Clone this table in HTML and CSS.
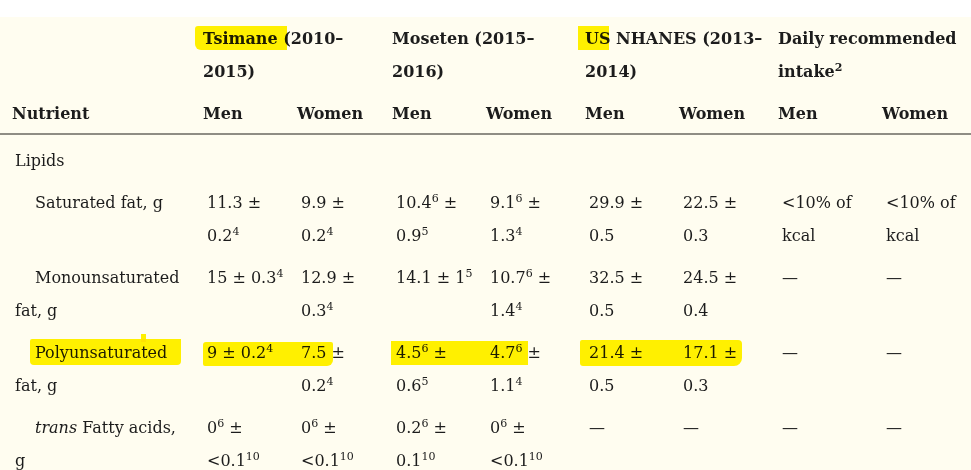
FILE: index.html
```html
<!DOCTYPE html>
<html lang="en">
<head>
<meta charset="utf-8">
<title>Nutrient intake</title>
<link rel="stylesheet" href="styles.css">
</head>
<body>
<div class="page">
  <div class="table-wrap">
    <table class="nutrients">
      <colgroup>
        <col class="c-label">
        <col class="c94"><col class="c95">
        <col class="c94"><col class="c99">
        <col class="c94"><col class="c99">
        <col class="c104"><col class="c97">
      </colgroup>
      <thead>
        <tr>
          <th></th>
          <th colspan="2">Tsimane (2010–<br>2015)</th>
          <th colspan="2">Moseten (2015–<br>2016)</th>
          <th colspan="2">US NHANES (2013–<br>2014)</th>
          <th colspan="2">Daily recommended<br>intake<sup>2</sup></th>
        </tr>
        <tr class="sub-head">
          <th class="first">Nutrient</th>
          <th>Men</th><th>Women</th>
          <th>Men</th><th>Women</th>
          <th>Men</th><th>Women</th>
          <th>Men</th><th>Women</th>
        </tr>
      </thead>
      <tbody>
        <tr class="group">
          <td class="label">Lipids</td>
          <td></td><td></td><td></td><td></td><td></td><td></td><td></td><td></td>
        </tr>
        <tr>
          <td class="label sub">Saturated fat, g</td>
          <td>11.3 ±<br>0.2<sup>4</sup></td>
          <td>9.9 ±<br>0.2<sup>4</sup></td>
          <td>10.4<sup>6</sup> ±<br>0.9<sup>5</sup></td>
          <td>9.1<sup>6</sup> ±<br>1.3<sup>4</sup></td>
          <td>29.9 ±<br>0.5</td>
          <td>22.5 ±<br>0.3</td>
          <td>&lt;10% of<br>kcal</td>
          <td>&lt;10% of<br>kcal</td>
        </tr>
        <tr>
          <td class="label sub">Monounsaturated fat, g</td>
          <td>15 ± 0.3<sup>4</sup></td>
          <td>12.9 ±<br>0.3<sup>4</sup></td>
          <td>14.1 ± 1<sup>5</sup></td>
          <td>10.7<sup>6</sup> ±<br>1.4<sup>4</sup></td>
          <td>32.5 ±<br>0.5</td>
          <td>24.5 ±<br>0.4</td>
          <td>—</td>
          <td>—</td>
        </tr>
        <tr>
          <td class="label sub">Polyunsaturated fat, g</td>
          <td>9 ± 0.2<sup>4</sup></td>
          <td>7.5 ±<br>0.2<sup>4</sup></td>
          <td>4.5<sup>6</sup> ±<br>0.6<sup>5</sup></td>
          <td>4.7<sup>6</sup> ±<br>1.1<sup>4</sup></td>
          <td>21.4 ±<br>0.5</td>
          <td>17.1 ±<br>0.3</td>
          <td>—</td>
          <td>—</td>
        </tr>
        <tr>
          <td class="label sub"><i>trans</i> Fatty acids, g</td>
          <td>0<sup>6</sup> ±<br>&lt;0.1<sup>10</sup></td>
          <td>0<sup>6</sup> ±<br>&lt;0.1<sup>10</sup></td>
          <td>0.2<sup>6</sup> ±<br>0.1<sup>10</sup></td>
          <td>0<sup>6</sup> ±<br>&lt;0.1<sup>10</sup></td>
          <td>—</td>
          <td>—</td>
          <td>—</td>
          <td>—</td>
        </tr>
      </tbody>
    </table>
    <span class="mark mark-tsimane"></span>
    <span class="mark mark-us"></span>
    <span class="mark mark-poly-label"></span>
    <span class="mark mark-poly-bump"></span>
    <span class="mark mark-poly-tsimane"></span>
    <span class="mark mark-poly-moseten"></span>
    <span class="mark mark-poly-us"></span>
  </div>
</div>
</body>
</html>
```

FILE: styles.css
```css
html, body {
  margin: 0;
  padding: 0;
  background: #ffffff;
}

.page {
  padding-top: 17px;
  width: 971px;
  overflow: hidden;
}

.table-wrap {
  position: relative;
  background: #fffdf0;
  width: 971px;
  height: 453px;
}

.nutrients {
  width: 971px;
  table-layout: fixed;
  border-collapse: collapse;
  font-family: "DejaVu Serif", "Liberation Serif", serif;
  font-size: 16px;
  color: #1c1c1c;
}

.c-label { width: 195px; }
.c94 { width: 94px; }
.c95 { width: 95px; }
.c97 { width: 97px; }
.c99 { width: 99px; }
.c104 { width: 104px; }

.nutrients th {
  text-align: left;
  vertical-align: top;
  font-weight: bold;
  line-height: 33px;
  padding: 5px 2px 4px 8px;
  white-space: nowrap;
}

.nutrients th.first {
  padding-left: 12px;
}

.sub-head th {
  padding-bottom: 3px;
  border-bottom: 2px solid #8f8d84;
}

.nutrients td {
  vertical-align: top;
  line-height: 33px;
  padding: 5px 2px 4px 12px;
  white-space: nowrap;
}

.nutrients td.label {
  padding-left: 15px;
  padding-right: 12px;
  white-space: normal;
}

.nutrients td.sub {
  text-indent: 20px;
}

.group td {
  padding-top: 9px;
}

.nutrients sup {
  font-size: 11px;
  line-height: 0;
  vertical-align: 6px;
}

.mark {
  position: absolute;
  background: #fff200;
  mix-blend-mode: multiply;
  pointer-events: none;
}

.mark-tsimane {
  left: 195px;
  top: 9px;
  width: 92px;
  height: 24px;
  border-radius: 3px 0 0 6px;
}

.mark-us {
  left: 578px;
  top: 9px;
  width: 31px;
  height: 24px;
}

.mark-poly-label {
  left: 30px;
  top: 322px;
  width: 151px;
  height: 26px;
  border-radius: 2px 0 4px 4px;
}

.mark-poly-bump {
  left: 141px;
  top: 317px;
  width: 5px;
  height: 8px;
}

.mark-poly-tsimane {
  left: 203px;
  top: 325px;
  width: 130px;
  height: 24px;
  border-radius: 3px 2px 6px 2px;
}

.mark-poly-moseten {
  left: 391px;
  top: 324px;
  width: 137px;
  height: 24px;
}

.mark-poly-us {
  left: 580px;
  top: 323px;
  width: 162px;
  height: 26px;
  border-radius: 2px 4px 8px 3px;
}
```
